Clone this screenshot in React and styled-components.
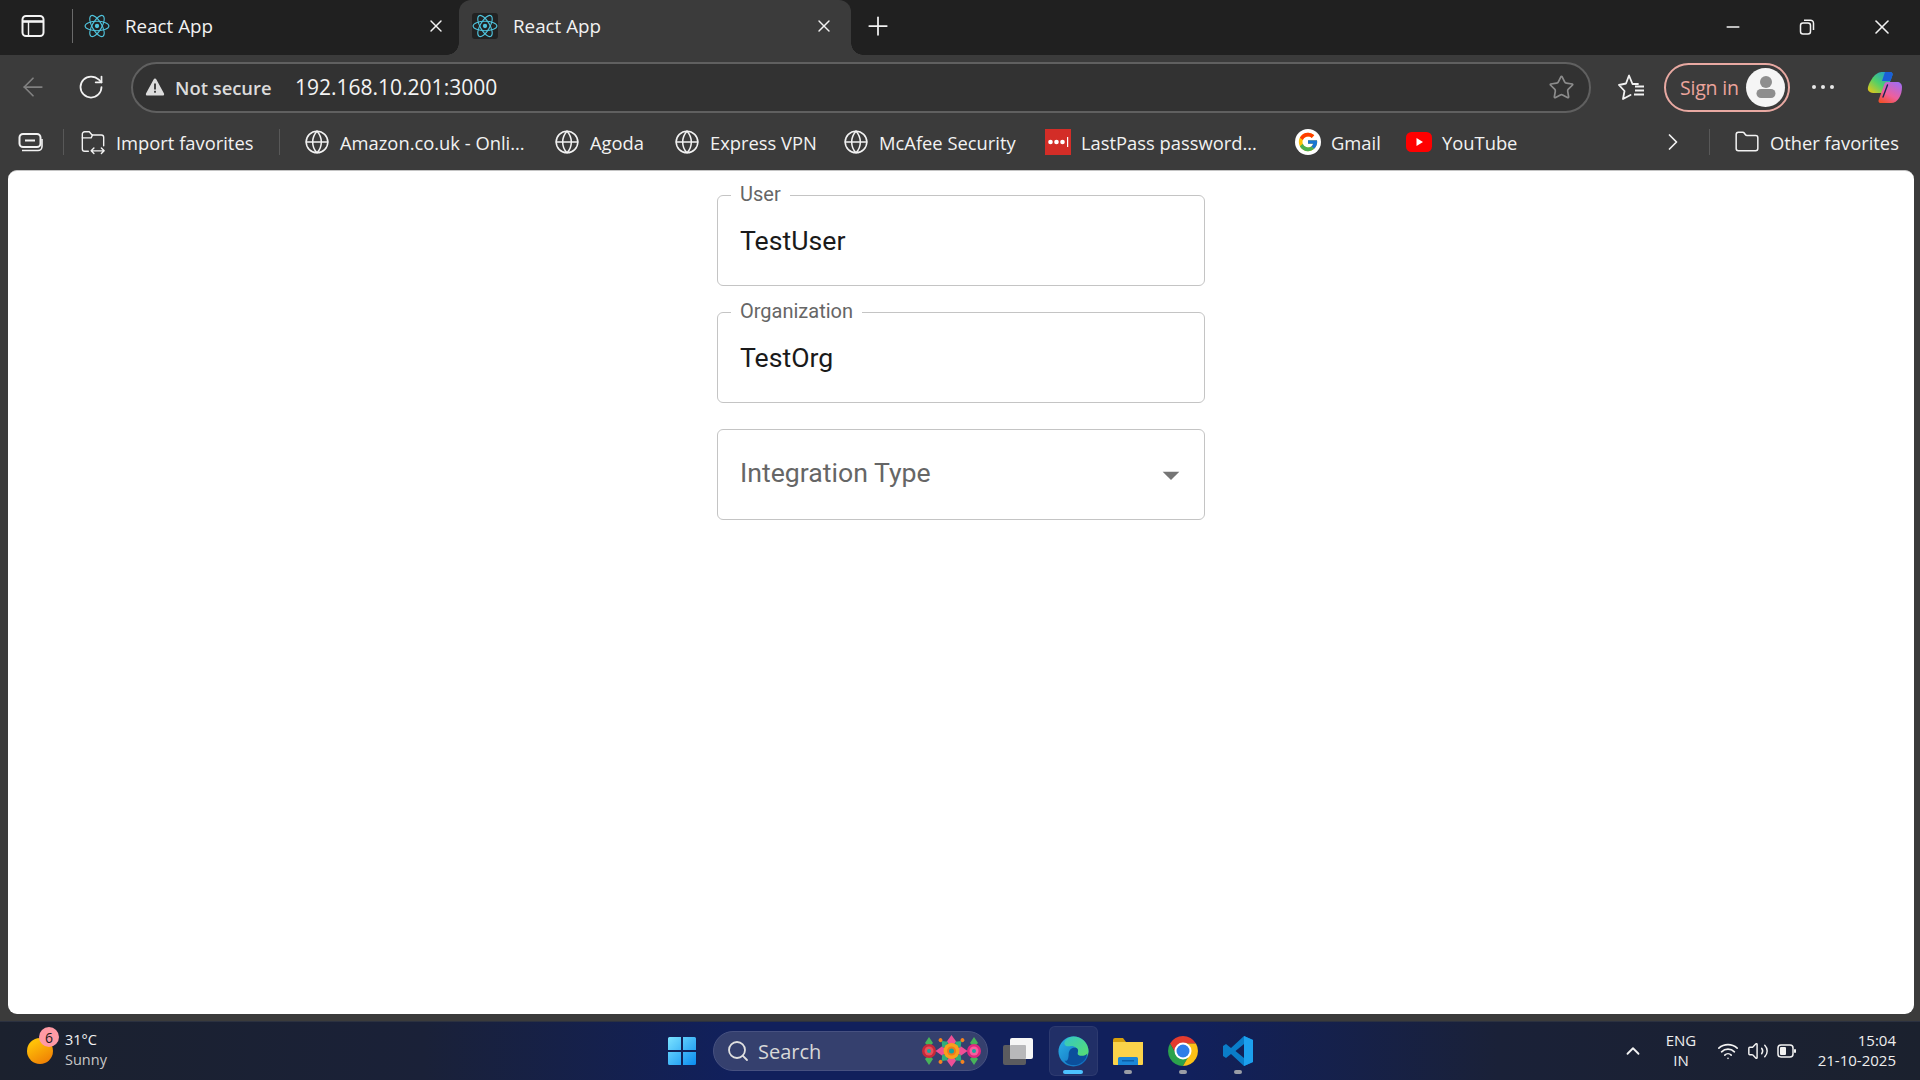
import React from "react";
import styled, { createGlobalStyle } from "styled-components";
import { X, Plus, Minus, ArrowLeft, RotateCw, Star, Globe, ChevronRight, ChevronUp, Folder, Search, Wifi, Volume2 } from "lucide-react";
import { FcGoogle } from "react-icons/fc";

const Global = createGlobalStyle`
  html, body { margin: 0; padding: 0; height: 100%; overflow: hidden; background: #3b3b3b; }
  * { box-sizing: border-box; }
`;
const UI = `"Open Sans", "Noto Sans", sans-serif`;

const Screen = styled.div`
  width: 1920px; height: 1080px; display: flex; flex-direction: column;
  background: #3b3b3b; font-family: ${UI}; color: #f2f2f2; overflow: hidden;
`;
const Slot = styled.div`
  flex: none; width: ${p => p.$w}px; margin-left: ${p => p.$ml || 0}px; padding-bottom: ${p => p.$pb || 0}px;
  display: flex; align-items: center; justify-content: center;
`;
const TabStrip = styled.div`
  height: 55px; flex: none; background: #202020; display: flex; align-items: stretch;
`;
const TabDivider = styled.div`
  flex: none; width: 1px; height: 34px; margin: 9px 0 0 6px; background: #6a6a6a;
`;
const Tab = styled.div`
  flex: none; position: relative; display: flex; align-items: center;
  width: ${p => (p.$active ? 392 : 386)}px;
  padding: ${p => (p.$active ? "0 17px 3px 14px" : "0 13px 3px 12px")};
  background: ${p => (p.$active ? "#3b3b3b" : "transparent")};
  border-radius: 12px 12px 0 0;
  ${p => p.$active && `
    &::before, &::after { content: ""; position: absolute; bottom: 0; width: 12px; height: 12px; }
    &::before { left: -12px; background: radial-gradient(circle at 0 0, transparent 11.5px, #3b3b3b 12px); }
    &::after { right: -12px; background: radial-gradient(circle at 100% 0, transparent 11.5px, #3b3b3b 12px); }
  `}
`;
const Favicon = styled.div`
  flex: none; width: 26px; height: 26px; margin-right: 15px; margin-left: -1px; border-radius: 3px;
  display: flex; align-items: center; justify-content: center;
  background: ${p => (p.$active ? "#222" : "transparent")};
`;
const TabTitle = styled.span`
  font-size: 18.8px; line-height: 24px; flex: 1;
`;
const CloseButton = styled.div`
  flex: none; width: 20px; display: flex; justify-content: center;
`;
const Spacer = styled.div`flex: 1;`;
const Toolbar = styled.div`
  height: 63px; flex: none; display: flex; align-items: center; padding-top: 1px;
`;
const Address = styled.div`
  flex: none; width: 1460px; height: 51px; margin-left: 15px; padding: 0 14px 0 12px;
  border: 2px solid #606060; border-radius: 26px; background: #323232;
  display: flex; align-items: center;
`;
const NotSecure = styled.span`
  margin-left: 10px; font-size: 18.4px; font-weight: 600; color: #dcdcdc; width: 120px;
`;
const Url = styled.span`
  font-size: 21px; color: #f4f4f4; flex: 1;
`;
const SignIn = styled.div`
  flex: none; width: 126px; height: 49px; margin-left: 7px; border: 2px solid #e8a9a2; border-radius: 25px;
  display: flex; align-items: center; padding-left: 14px; color: #eca49c; font-size: 19.5px; letter-spacing: -0.2px;
`;
const Avatar = styled.div`
  flex: none; width: 39px; height: 39px; margin-left: auto; margin-right: 3px; border-radius: 50%; background: #f5f5f5;
  display: flex; align-items: center; justify-content: center;
`;
const Dots = styled.div`
  display: flex; gap: 4.5px;
  & > i { width: 4.5px; height: 4.5px; border-radius: 50%; background: #e8e8e8; display: block; }
`;
const BookmarkBar = styled.div`
  height: 52px; flex: none; display: flex; align-items: center; padding-bottom: 4px;
`;
const BarDivider = styled.div`
  flex: none; width: 1px; height: 26px; background: #585858;
  margin-left: ${p => p.$ml || 0}px; margin-right: ${p => p.$mr || 0}px;
`;
const Bookmark = styled.div`
  flex: none; width: ${p => p.$w ? p.$w + "px" : "auto"};
  display: flex; align-items: center; gap: 10px; font-size: 18.35px; color: #f2f2f2; white-space: nowrap;
`;
const BookmarkIcon = styled.div`
  flex: none; width: 26px; height: 26px; display: flex; align-items: center; justify-content: center;
`;
const PageWrap = styled.div`
  flex: 1; padding: 0 6px 7px 8px; min-height: 0; display: flex;
`;
const Page = styled.main`
  flex: 1; background: #fff; border-radius: 9px; border-top: 1px solid #c4c4c4;
  display: flex; flex-direction: column; align-items: center; gap: 26px; padding: 24px 0 0 0;
  font-family: Roboto, sans-serif;
`;
const Field = styled.fieldset`
  margin: 0; padding: 0; width: 488px; height: 91px; flex: none;
  border: 1px solid #c4c4c4; border-radius: 6px; min-width: 0;
`;
const Legend = styled.legend`
  padding: 0 9px; margin-left: 13px; height: 0; line-height: 0; font-size: 20px; color: #666;
`;
const LegendText = styled.span`
  display: block; transform: translateY(-2px);
`;
const FieldBody = styled.div`
  height: 89px; padding: 0 22px; display: flex; align-items: center;
`;
const Value = styled.div`
  font-size: 26.67px; line-height: 32px; color: #1a1a1a;
`;
const Placeholder = styled(Value)`
  color: #666; flex: 1; margin-top: -3px;
`;
const Caret = styled.svg`
  flex: none; width: 40px; height: 40px; margin-right: -9px; fill: #757575;
`;
const Taskbar = styled.div`
  height: 59px; flex: none; display: grid; grid-template-columns: 654px auto 1fr; align-items: center;
  background: linear-gradient(90deg, #1b212e 0%, #1a2138 22%, #11205c 38%, #11205c 62%, #1a2138 78%, #1b212e 100%);
  border-top: 1px solid #2b3140;
`;
const Weather = styled.div`
  display: flex; align-items: center; padding-left: 27px; height: 100%;
`;
const SunWrap = styled.div`
  position: relative; width: 26px; height: 26px; border-radius: 50%;
  background: linear-gradient(150deg, #ffc107 20%, #ee7a05 95%);
`;
const Badge = styled.div`
  position: absolute; top: -11px; right: -6px; width: 20px; height: 20px; border-radius: 50%;
  background: #ff9aa4; color: #1a1a1a; font-size: 14px; display: flex; align-items: center; justify-content: center;
  font-family: ${UI};
`;
const WeatherText = styled.div`
  margin: -3px 0 0 12px; display: flex; flex-direction: column; font-size: 14.5px; line-height: 20px; color: #f2f2f2;
  & > span:last-child { color: #c8c8c8; }
`;
const Center = styled.div`
  display: flex; align-items: center; height: 100%;
`;
const SearchBox = styled.div`
  flex: none; width: 275px; height: 40px; margin-left: 4px; border-radius: 20px; background: #35406e;
  border: 1px solid #475180; display: flex; align-items: center; padding: 0 4px 0 12px; font-size: 20px; color: #d8d8d8;
`;
const SearchLabel = styled.span`margin-left: 8px; flex: 1;`;
const TaskSlot = styled.div`
  flex: none; width: 55px; height: 50px; position: relative; margin-left: ${p => p.$ml || 0}px;
  display: flex; align-items: center; justify-content: center;
  ${p => p.$active && `
    &::before { content: ""; position: absolute; left: 3px; right: 3px; top: 0; bottom: 0;
      border-radius: 6px; background: rgba(255,255,255,.07); border: 1px solid rgba(255,255,255,.05); }
  `}
  & > svg { position: relative; }
`;
const Pip = styled.span`
  position: absolute; bottom: 2px; left: 50%; height: 4px; border-radius: 2px;
  width: ${p => (p.$active ? 20 : 8)}px; margin-left: ${p => (p.$active ? -10 : -4)}px;
  background: ${p => (p.$active ? "#4cc2ff" : "#9a9da6")};
`;
const Tray = styled.div`
  display: flex; align-items: center; justify-content: flex-end; padding-right: 24px; height: 100%;
`;
const Lang = styled.div`
  font-size: 15px; line-height: 20px; text-align: center; color: #eee; margin-top: -2px;
`;
const Clock = styled.div`
  flex: none; width: 94px; margin-top: -3px; text-align: right; font-size: 15px; line-height: 20px; color: #eee; white-space: nowrap;
`;

const ReactLogo = () => (
  <svg width="26" height="26" viewBox="-12 -12 24 24" fill="none" stroke="#4fc3dc" strokeWidth="1">
    <circle r="2" fill="#4fc3dc" stroke="none" />
    <ellipse rx="11" ry="4.4" />
    <ellipse rx="11" ry="4.4" transform="rotate(60)" />
    <ellipse rx="11" ry="4.4" transform="rotate(120)" />
  </svg>
);
const SidebarIcon = () => (
  <svg width="24" height="24" viewBox="0 0 24 24" fill="none" stroke="#f4f4f4" strokeWidth="2">
    <rect x="1.5" y="2" width="21" height="20" rx="3.5" />
    <path d="M2 7.5h20" strokeWidth="2.6" /><path d="M7.5 8v13" strokeWidth="1.4" />
  </svg>
);
const RestoreIcon = () => (
  <svg width="18" height="18" viewBox="0 0 18 18" fill="none" stroke="#f2f2f2" strokeWidth="1.5">
    <rect x="2.5" y="5" width="10" height="11" rx="2.5" />
    <path d="M6 2.2h6.5a3 3 0 0 1 3 3V12" />
  </svg>
);
const WarnIcon = () => (
  <svg width="20" height="20" viewBox="0 0 20 20">
    <path d="M10 1.6c.6 0 1.1.3 1.4.8l7.6 14c.5 1-.2 2.1-1.3 2.1H2.3c-1.1 0-1.8-1.1-1.3-2.1l7.6-14c.3-.5.8-.8 1.4-.8z" fill="#dcdcdc" />
    <rect x="9.1" y="6.5" width="1.8" height="6" fill="#333" /><rect x="9.1" y="13.8" width="1.8" height="1.9" fill="#333" />
  </svg>
);
const FavStarIcon = () => (
  <svg width="28" height="28" viewBox="0 0 28 28" fill="none" stroke="#f2f2f2" strokeWidth="1.8" strokeLinejoin="round" strokeLinecap="round">
    <path d="M20 11H14.500L11 2.500L8 10.500L1 12L6.500 18L5 26L12.500 22" />
    <path d="M17 13.500h9M17 17.500h9M16 21.500h10" strokeLinecap="butt" />
  </svg>
);
const WalletIcon = () => (
  <svg width="26" height="22" viewBox="0 0 26 22" fill="none" stroke="#f2f2f2" strokeWidth="2">
    <rect x="1.5" y="3" width="21" height="13" rx="3.5" />
    <path d="M7 9.5h10" /><path d="M4 19.5h16a4 4 0 0 0 4-4V8" strokeWidth="1.6" />
  </svg>
);
const ImportIcon = () => (
  <svg width="28" height="28" viewBox="0 0 28 28" fill="none" stroke="#f2f2f2" strokeWidth="1.5" strokeLinejoin="round" strokeLinecap="round">
    <path d="M9 24H5a2.5 2.5 0 0 1-2.5-2.5v-16A2.5 2.5 0 0 1 5 3h5l3 3.5h10A2.5 2.5 0 0 1 25.5 9v9" />
    <path d="M2.5 9.5H12l1.5-3" />
    <path d="M12 23.5h14M15 20.5l-3 3 3 3M23 20.5l3 3-3 3" />
  </svg>
);
const LastPass = () => (
  <svg width="26" height="26" viewBox="0 0 26 26">
    <rect width="26" height="26" fill="#d32d27" />
    <circle cx="5.5" cy="13" r="2.3" fill="#fff" /><circle cx="11.5" cy="13" r="2.3" fill="#fff" /><circle cx="17.5" cy="13" r="2.3" fill="#fff" />
    <rect x="22" y="8" width="1.2" height="10" fill="#fff" />
  </svg>
);
const YouTube = () => (
  <svg width="26" height="20" viewBox="0 0 26 20">
    <rect width="26" height="20" rx="5.5" fill="#f00" />
    <path d="M10.5 6l6.5 4-6.500 4z" fill="#fff" />
  </svg>
);
const GoogleWrap = styled.div`
  width: 26px; height: 26px; border-radius: 50%; background: #fff; display: flex; align-items: center; justify-content: center;
`;
const Copilot = () => (
  <svg width="36" height="33" viewBox="0 0 36 33">
    <defs>
      <linearGradient id="cpA" x1="0" y1="1" x2="1" y2="0"><stop offset="0" stopColor="#f7c60f" /><stop offset=".45" stopColor="#4fd06a" /><stop offset="1" stopColor="#1490e8" /></linearGradient>
      <linearGradient id="cpB" x1=".2" y1="1" x2=".8" y2="0"><stop offset="0" stopColor="#f2502e" /><stop offset=".4" stopColor="#ee5f9c" /><stop offset="1" stopColor="#a46cf0" /></linearGradient>
    </defs>
    <path d="M11 2C12.500 1 14 1 16 1H23C25 1 26 2.500 25.500 4L19 22H8C3 22 0 20 1 16C2 12 5 7 8 4Z" fill="url(#cpA)" />
    <path d="M20 11H30C33 11 35 13 35 16C35 24 31 32 24 32H14C11.500 32 11 30 12 28L17 14C17.500 12 18.500 11 20 11Z" fill="url(#cpB)" />
    <path d="M18 1H23C25 1 26 2.500 25.500 4L23.500 10H15z" fill="#1a5fd8" />
    <path d="M20.500 14L16 26" stroke="#1c2450" strokeWidth="1.4" strokeLinecap="round" />
  </svg>
);
const WinLogo = () => (
  <svg width="30" height="30" viewBox="0 0 30 30">
    <defs><linearGradient id="win" x1="0" y1="0" x2="1" y2="1"><stop offset="0" stopColor="#7be3ff" /><stop offset="1" stopColor="#0a8cf0" /></linearGradient></defs>
    <path d="M1 2.5A1.5 1.5 0 0 1 2.5 1H14v13H1zM16 1h11.5A1.5 1.5 0 0 1 29 2.500V14H16zM1 16h13v13H2.500A1.5 1.5 0 0 1 1 27.500zM16 16h13v11.500a1.500 1.500 0 0 1-1.500 1.500H16z" fill="url(#win)" />
  </svg>
);
const SideFlower = ({ x, color, dot }) => (
  <g transform={`translate(${x} 17)`}>
    <path d="M0-14l4 6-4 4-4-4zM0 14l4-6-4-4-4 4z" fill="#48b35a" />
    <circle r="7" fill={color} /><circle r="4.500" fill={dot} /><circle r="2" fill="#18a8a0" />
  </g>
);
const Mandala = () => (
  <svg width="62" height="34" viewBox="0 0 62 34">
    <SideFlower x={8} color="#c8283a" dot="#e8505a" />
    <SideFlower x={53} color="#e0287e" dot="#f5609e" />
    <g transform="translate(30.500 17)">
      {[0, 90, 180, 270].map(a => (
        <path key={a} d="M0-16l5 7-5 4-5-4z" fill="#ef4f96" transform={`rotate(${a})`} />
      ))}
      {[45, 135, 225, 315].map(a => (
        <g key={a} transform={`rotate(${a})`}>
          <path d="M0-14l4 5-4 3-4-3z" fill="#2fae7a" />
          <circle cy="-15.500" r="2" fill="#f5821f" />
        </g>
      ))}
      <circle r="8" fill="#f7a01d" /><circle r="4.500" fill="#ee7a1a" /><circle r="2.500" fill="#12a3a3" />
    </g>
  </svg>
);
const TaskView = () => (
  <svg width="30" height="27" viewBox="0 0 30 27">
    <rect x="0" y="7" width="23" height="20" rx="2" fill="#5b5b5f" />
    <rect x="7" y="0" width="23" height="21" rx="2" fill="#f6f6f6" />
    <rect x="7" y="7" width="16" height="14" rx="1" fill="#b8b8ba" />
  </svg>
);
const Edge = () => (
  <svg width="31" height="31" viewBox="0 0 32 32">
    <defs>
      <linearGradient id="eA" x1="0" y1="0" x2="1" y2="1"><stop offset="0" stopColor="#2bb4e8" /><stop offset="1" stopColor="#0d63b8" /></linearGradient>
      <linearGradient id="eB" x1="0" y1="0" x2="1" y2="1"><stop offset="0" stopColor="#34c6c6" /><stop offset="1" stopColor="#5be06a" /></linearGradient>
    </defs>
    <circle cx="16" cy="16" r="15.500" fill="url(#eA)" />
    <path d="M16 .5C24.500.5 31.500 7.500 31.500 15.500c0 5-3.500 7.500-7 7.500-3 0-5-1-5-3 0-1 1-1.500 1-3.500C20.500 12 16.500 9.500 12 10.500 8 11.500 4.500 8 8 4 10 2 13 .5 16 .5z" fill="url(#eB)" />
    <path d="M11 19c0-5 4-8 8-6.500 2 .8 2 3 1.300 4.500-.5 1.200.2 3.500 4 3.500 2.700 0 4.700-1 6-2.500-1 6.500-7 12-14 12-5 0-8.500-2-9.500-5C9 27 11 24 11 19z" fill="#0b4f9c" />
  </svg>
);
const Explorer = () => (
  <svg width="30" height="27" viewBox="0 0 30 27">
    <path d="M0 2a2 2 0 0 1 2-2h8l3 4h17v3H0z" fill="#d79f0d" />
    <path d="M0 4h30v22a1 1 0 0 1-1 1H1a1 1 0 0 1-1-1z" fill="#fbd34a" />
    <path d="M5 20.500A1.500 1.500 0 0 1 6.500 19h17a1.500 1.500 0 0 1 1.500 1.500V27H5z" fill="#1a86d8" />
    <rect x="9" y="22" width="12" height="1.500" fill="#0c5fa8" />
  </svg>
);
const Chrome = () => (
  <svg width="30" height="30" viewBox="2 2 44 44">
    <path d="M43 13A22 22 0 0 0 5 13l9.500 16.500L24 13z" fill="#e33b2e" />
    <path d="M5 13a22 22 0 0 0 19 33l9.500-16.500h-19z" fill="#2ba24c" />
    <path d="M24 46a22 22 0 0 0 19-33H24l9.500 16.500z" fill="#fbc116" />
    <circle cx="24" cy="24" r="12.500" fill="#fff" /><circle cx="24" cy="24" r="9.500" fill="#2f7de8" />
  </svg>
);
const VSCode = () => (
  <svg width="30" height="30" viewBox="0 0 30 30">
    <path fillRule="evenodd" d="M21 0L30 4V26L21 30L8 18L3 22L0 20V10L3 8L8 12ZM21 8L12.500 15L21 22Z" fill="#0a7dc9" />
    <path d="M21 0L30 4V26L21 30Z" fill="#1ca0ee" />
  </svg>
);
const Battery = () => (
  <svg width="20" height="16" viewBox="0 0 20 16" fill="none">
    <rect x="1" y="2" width="15" height="12" rx="3" stroke="#f2f2f2" strokeWidth="1.500" />
    <rect x="3" y="4" width="6" height="8" rx="1" fill="#f2f2f2" />
    <rect x="17" y="6" width="2" height="4" rx="1" fill="#f2f2f2" />
  </svg>
);

const bookmarks = [
  ["Amazon.co.uk - Onli...", 250], ["Agoda", 120], ["Express VPN", 169], ["McAfee Security", 202],
];

export default function App() {
  return (
    <Screen>
      <Global />
      <TabStrip>
        <Slot $w={66} $pb={3}><SidebarIcon /></Slot>
        <TabDivider />
        <Tab>
          <Favicon><ReactLogo /></Favicon>
          <TabTitle>React App</TabTitle>
          <CloseButton><X size={20} color="#f2f2f2" strokeWidth={1.7} /></CloseButton>
        </Tab>
        <Tab $active>
          <Favicon $active><ReactLogo /></Favicon>
          <TabTitle>React App</TabTitle>
          <CloseButton><X size={20} color="#f2f2f2" strokeWidth={1.7} /></CloseButton>
        </Tab>
        <Slot $w={54} $pb={4}><Plus size={30} color="#f2f2f2" strokeWidth={1.4} /></Slot>
        <Spacer />
        <Slot $w={74} $pb={1}><Minus size={20} color="#f2f2f2" strokeWidth={1.8} /></Slot>
        <Slot $w={74} $pb={1}><RestoreIcon /></Slot>
        <Slot $w={76} $pb={1}><X size={24} color="#f2f2f2" strokeWidth={1.6} /></Slot>
      </TabStrip>

      <Toolbar>
        <Slot $w={66}><ArrowLeft size={30} color="#808080" strokeWidth={1.4} /></Slot>
        <Slot $w={50}><RotateCw size={28} color="#f2f2f2" strokeWidth={1.5} /></Slot>
        <Address>
          <WarnIcon />
          <NotSecure>Not secure</NotSecure>
          <Url>192.168.10.201:3000</Url>
          <Star size={27} color="#8c8c8c" strokeWidth={1.5} />
        </Address>
        <Slot $w={50} $ml={16}><FavStarIcon /></Slot>
        <SignIn>
          Sign in
          <Avatar>
            <svg width="20" height="22" viewBox="0 0 20 22" fill="#8e8e8e">
              <circle cx="10" cy="6" r="6" /><rect x="0.5" y="13" width="19" height="9" rx="4.500" />
            </svg>
          </Avatar>
        </SignIn>
        <Slot $w={66}><Dots><i /><i /><i /></Dots></Slot>
        <Slot $w={58}><Copilot /></Slot>
      </Toolbar>

      <BookmarkBar>
        <Slot $w={61}><WalletIcon /></Slot>
        <BarDivider $ml={2} $mr={16} />
        <Bookmark $w={199}><BookmarkIcon><ImportIcon /></BookmarkIcon>Import favorites</Bookmark>
        <BarDivider $mr={24} />
        {bookmarks.map(([t, w]) => (
          <Bookmark key={t} $w={w}><BookmarkIcon><Globe size={28} color="#f2f2f2" strokeWidth={1.4} /></BookmarkIcon>{t}</Bookmark>
        ))}
        <Bookmark $w={250}><BookmarkIcon><LastPass /></BookmarkIcon>LastPass password...</Bookmark>
        <Bookmark $w={111}><BookmarkIcon><GoogleWrap><FcGoogle size={22} /></GoogleWrap></BookmarkIcon>Gmail</Bookmark>
        <Bookmark $w={247}><BookmarkIcon><YouTube /></BookmarkIcon>YouTube</Bookmark>
        <Slot $w={40}><ChevronRight size={28} color="#f2f2f2" strokeWidth={1.5} /></Slot>
        <BarDivider $ml={16} $mr={24} />
        <Bookmark><BookmarkIcon><Folder size={28} color="#f2f2f2" strokeWidth={1.4} /></BookmarkIcon>Other favorites</Bookmark>
      </BookmarkBar>

      <PageWrap>
        <Page>
          <Field>
            <Legend><LegendText>User</LegendText></Legend>
            <FieldBody><Value>TestUser</Value></FieldBody>
          </Field>
          <Field>
            <Legend><LegendText>Organization</LegendText></Legend>
            <FieldBody><Value>TestOrg</Value></FieldBody>
          </Field>
          <Field>
            <FieldBody>
              <Placeholder>Integration Type</Placeholder>
              <Caret viewBox="0 0 24 24"><path d="M7 10l5 5 5-5z" /></Caret>
            </FieldBody>
          </Field>
        </Page>
      </PageWrap>

      <Taskbar>
        <Weather>
          <SunWrap><Badge>6</Badge></SunWrap>
          <WeatherText><span>31°C</span><span>Sunny</span></WeatherText>
        </Weather>
        <Center>
          <Slot $w={55}><WinLogo /></Slot>
          <SearchBox>
            <Search size={24} color="#e0e0e0" strokeWidth={1.8} />
            <SearchLabel>Search</SearchLabel>
            <Mandala />
          </SearchBox>
          <TaskSlot $ml={2.5}><TaskView /></TaskSlot>
          <TaskSlot $active><Edge /><Pip $active /></TaskSlot>
          <TaskSlot><Explorer /><Pip /></TaskSlot>
          <TaskSlot><Chrome /><Pip /></TaskSlot>
          <TaskSlot><VSCode /><Pip /></TaskSlot>
        </Center>
        <Tray>
          <Slot $w={32}><ChevronUp size={22} color="#f2f2f2" strokeWidth={2} /></Slot>
          <Slot $w={64}><Lang>ENG<br />IN</Lang></Slot>
          <Slot $w={30}><Wifi size={22} color="#f2f2f2" strokeWidth={1.8} /></Slot>
          <Slot $w={29}><Volume2 size={22} color="#f2f2f2" strokeWidth={1.6} /></Slot>
          <Slot $w={30}><Battery /></Slot>
          <Clock>15:04<br />21-10-2025</Clock>
        </Tray>
      </Taskbar>
    </Screen>
  );
}
